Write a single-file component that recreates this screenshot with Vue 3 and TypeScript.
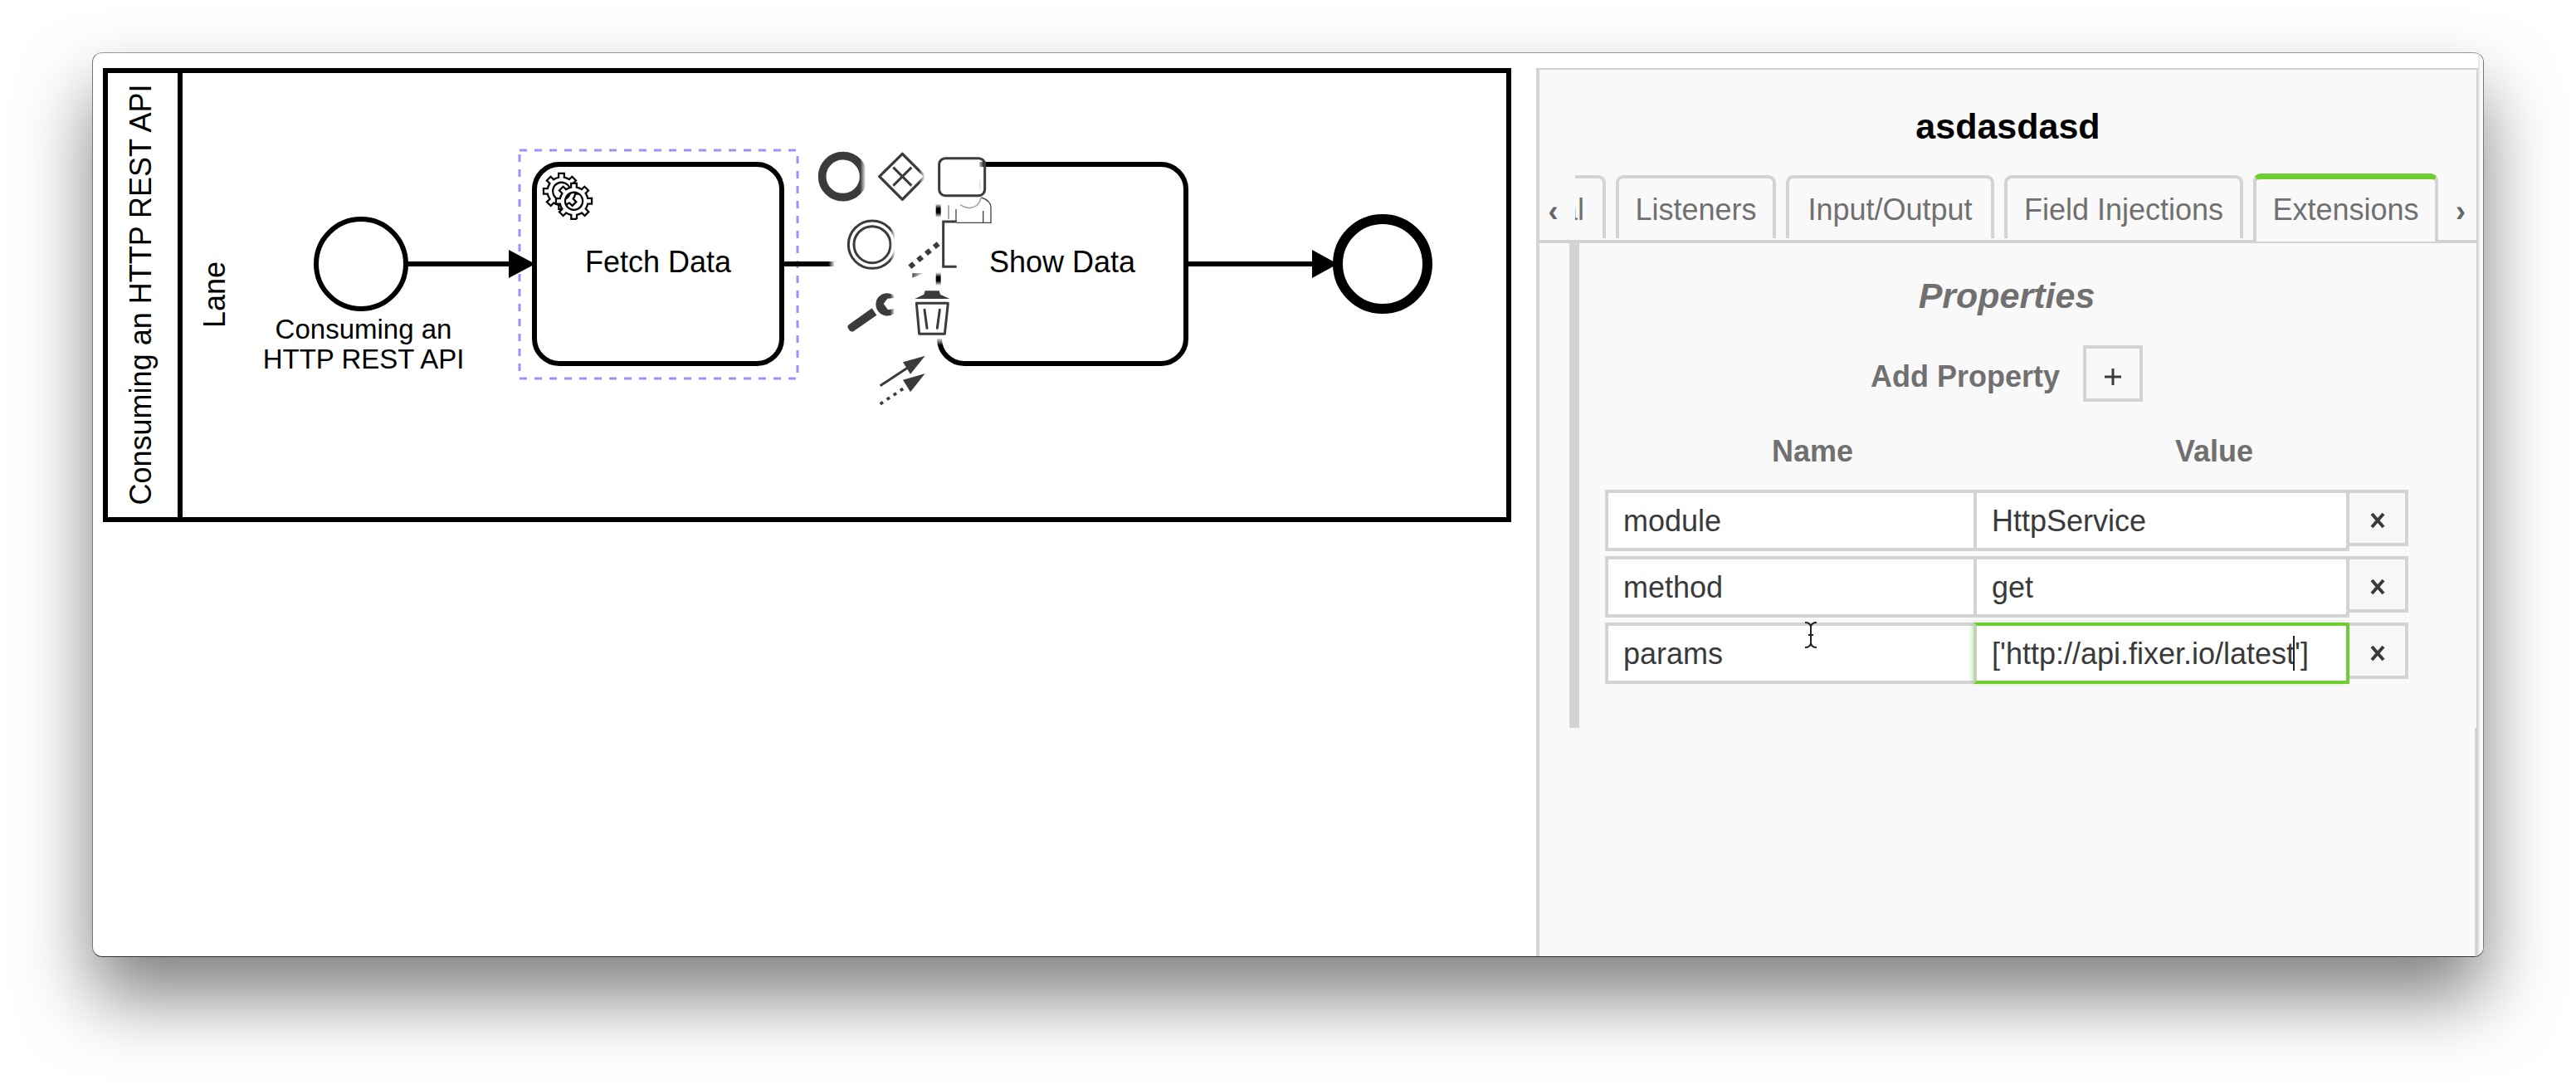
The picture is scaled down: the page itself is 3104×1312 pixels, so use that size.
<script setup lang="ts">
import { ref } from 'vue'

interface Property {
  name: string
  value: string
}

const tabs = ['General', 'Listeners', 'Input/Output', 'Field Injections', 'Extensions']
const activeTab = ref('Extensions')

const properties = ref<Property[]>([
  { name: 'module', value: 'HttpService' },
  { name: 'method', value: 'get' },
  { name: 'params', value: "['http://api.fixer.io/latest']" },
])
const focusedRow = ref(2)

function addProperty(): void {
  properties.value.push({ name: '', value: '' })
}

function removeProperty(index: number): void {
  properties.value.splice(index, 1)
}

const gear =
  'v -1.71335 c 0.352326,-0.0705 0.703932,-0.17838 1.047628,-0.32133 0.344416,-0.14465 0.665822,-0.32133 0.966377,-0.52145 l 1.19431,1.18005 1.567487,-1.57688 -1.195028,-1.18014 c 0.403376,-0.61394 0.683079,-1.29908 0.825447,-2.01824 l 1.622133,-0.01 v -2.2196 l -1.636514,0.01 c -0.07333,-0.35153 -0.178319,-0.70024 -0.323564,-1.04372 -0.145244,-0.34406 -0.321407,-0.6644 -0.522735,-0.96217 l 1.131035,-1.13631 -1.583305,-1.56293 -1.129598,1.13589 c -0.614052,-0.40108 -1.302883,-0.68093 -2.022633,-0.82247 l 0.0093,-1.61852 h -2.241173 l 0.0042,1.63124 c -0.353763,0.0736 -0.705369,0.17977 -1.049785,0.32371 -0.344415,0.14437 -0.665102,0.32092 -0.9635006,0.52006 l -1.1698628,-1.15823 -1.5667691,1.5792 1.1684265,1.15669 c -0.4026573,0.61283 -0.68308,1.29797 -0.8247287,2.01713 l -1.6588041,0.003 v 2.22174 l 1.6724648,-0.006 c 0.073327,0.35077 0.1797598,0.70243 0.3242851,1.04472 0.1452428,0.34448 0.3214064,0.6644 0.5227339,0.96066 l -1.1993431,1.19723 1.5840256,1.56011 1.1964668,-1.19348 c 0.6140517,0.40346 1.3028827,0.68232 2.0233517,0.82331 l 7.19e-4,1.69892 h 2.226848 z m 0.221462,-3.9957 c -1.788948,0.7502 -3.8576,-0.0928 -4.6097055,-1.87438 -0.7521065,-1.78321 0.090598,-3.84627 1.8802645,-4.59604 1.78823,-0.74936 3.856881,0.0929 4.608987,1.87437 0.752106,1.78165 -0.0906,3.84612 -1.879546,4.59605 z'
</script>

<template>
  <div class="page">
    <main class="window">
      <section class="canvas" aria-label="Process diagram">
        <svg class="diagram" viewBox="112 64 1739 1088">
          <defs>
            <linearGradient id="fade-right">
              <stop offset="0" stop-color="#fff" stop-opacity="0" />
              <stop offset="1" stop-color="#fff" />
            </linearGradient>
            <linearGradient id="fade-left">
              <stop offset="0" stop-color="#fff" />
              <stop offset="1" stop-color="#fff" stop-opacity="0" />
            </linearGradient>
            <linearGradient id="fade-up" x1="0" y1="0" x2="0" y2="1">
              <stop offset="0" stop-color="#fff" />
              <stop offset="1" stop-color="#fff" stop-opacity="0" />
            </linearGradient>
            <linearGradient id="fade-ends" x1="0" y1="0" x2="0" y2="1">
              <stop offset="0" stop-color="#000" stop-opacity="0" />
              <stop offset="0.35" stop-color="#000" />
              <stop offset="0.65" stop-color="#000" />
              <stop offset="1" stop-color="#000" stop-opacity="0" />
            </linearGradient>
            <linearGradient id="wedge">
              <stop offset="0" stop-color="#555" />
              <stop offset="1" stop-color="#555" stop-opacity="0" />
            </linearGradient>
          </defs>

          <!-- pool and lane -->
          <g fill="none" stroke="#000" stroke-width="6">
            <rect x="127" y="85" width="1691" height="541" />
            <path d="M217 85V626" />
          </g>
          <g class="label">
            <text transform="translate(182 355) rotate(-90)">Consuming an HTTP REST API</text>
            <text transform="translate(271 355) rotate(-90)">Lane</text>
          </g>

          <!-- selection outline -->
          <rect x="626" y="181" width="335" height="275" fill="none" stroke="#a08ffb" stroke-width="3" stroke-dasharray="9 9" />

          <!-- start event -->
          <circle cx="435" cy="318" r="54" fill="#fff" stroke="#000" stroke-width="6" />
          <g class="label small">
            <text x="438" y="408">Consuming an</text>
            <text x="438" y="444">HTTP REST API</text>
          </g>

          <!-- tasks -->
          <g fill="#fff" stroke="#000" stroke-width="6">
            <rect x="644" y="198" width="298" height="240" rx="30" />
            <path d="M1180 198H1399a30 30 0 0 1 30 30V408a30 30 0 0 1-30 30H1162a30 30 0 0 1-30-30" />
          </g>
          <g class="label">
            <text x="793" y="328">Fetch Data</text>
            <text x="1280" y="328">Show Data</text>
          </g>
          <g transform="translate(644 198) scale(3)" fill="#fff" stroke="#000" stroke-width="0.75">
            <path :d="`m 12,18 ${gear}`" />
            <path :d="`m 17,22 ${gear}`" />
          </g>

          <!-- flows -->
          <g stroke="#000" stroke-width="6">
            <path d="M491 318H614M945 318H1005M1432 318H1582" />
          </g>
          <path d="M613 301L645 318L613 335ZM1581 301L1612 318L1581 335Z" />
          <rect x="998" y="310" width="8" height="16" fill="url(#fade-right)" />

          <!-- end event -->
          <circle cx="1666" cy="318" r="54" fill="#fff" stroke="#000" stroke-width="12" />

          <!-- context pad -->
          <svg x="960" y="160" width="280" height="340" viewBox="0 0 840 1020">
            <rect x="500" y="740" width="40" height="28" fill="url(#fade-up)" />
            <rect x="655" y="100" width="25" height="30" fill="url(#fade-left)" />
            <rect x="503" y="256" width="18" height="50" fill="url(#fade-ends)" />
            <rect x="503" y="504" width="18" height="48" fill="url(#fade-ends)" />

            <g fill="none" stroke="#3b3b3b" stroke-width="9">
              <circle cx="167" cy="158" r="75" stroke-width="29" />
              <path d="M382 76L464 158L382 241L299 158Z" stroke-width="10" stroke-linejoin="round" />
              <path d="M349 125L415 191M415 125L349 191" />
              <rect x="515" y="92" width="165" height="135" rx="22" />
              <circle cx="273" cy="404" r="86" />
              <circle cx="273" cy="404" r="66" />
              <path d="M578 321H530V484H578" />
              <path d="M409 485L518 396" stroke-width="19" stroke-dasharray="19 19" />
              <path d="M433 616H547L535 727H443Z" stroke-linejoin="round" />
              <path d="M462 640L471 706M517 640L508 706" stroke-linecap="round" />
              <path d="M302 914L400 850" />
              <path d="M302 980L392 920" stroke-dasharray="12 17" stroke-width="11" />
            </g>
            <g fill="none" stroke="#444" stroke-width="4">
              <path d="M592 260Q625 282 652 262Q664 250 666 233" stroke="#999" />
              <path d="M662 172V204" stroke="#ddd" />
              <path d="M668 234Q702 246 702 270V325H578M674 282V325M576 276V322" />
              <path d="M549 262V312" stroke="#888" />
            </g>
            <g fill="#3b3b3b">
              <path d="M427 600L460 584L464 571H515L519 584L553 600Z" />
              <path d="M384 829L464 806L411 872Z" />
              <path d="M384 893L464 870L411 937Z" />
              <path d="M272 634L289 659L206 717Q196 722 189 712L185 704Q182 697 190 692Z" />
              <path d="M352 588A41 41 0 1 0 352 653V636L330 640L314 618L328 599L352 597Z" />
            </g>
            <path d="M418 507H462L418 524Z" fill="url(#wedge)" />

            <rect x="230" y="60" width="20" height="200" fill="url(#fade-right)" />
            <rect x="248" y="60" width="16" height="200" fill="#fff" />
            <rect x="442" y="120" width="22" height="80" fill="url(#fade-right)" />
            <rect x="462" y="120" width="12" height="80" fill="#fff" />
            <rect x="338" y="340" width="18" height="140" fill="url(#fade-right)" />
            <rect x="354" y="340" width="12" height="140" fill="#fff" />
            <rect x="338" y="580" width="18" height="90" fill="url(#fade-right)" />
          </svg>
        </svg>
      </section>

      <aside class="panel">
        <h1 class="title">asdasdasd</h1>

        <nav class="tab-strip">
          <button class="scroll scroll-left" type="button" aria-label="Scroll tabs left">‹</button>
          <div class="tabs" role="tablist">
            <button
              v-for="tab in tabs"
              :key="tab"
              type="button"
              role="tab"
              class="tab"
              :class="{ active: tab === activeTab }"
              :aria-selected="tab === activeTab"
              @click="activeTab = tab"
            >{{ tab }}</button>
          </div>
          <button class="scroll scroll-right" type="button" aria-label="Scroll tabs right">›</button>
        </nav>

        <div class="body">
          <div class="content">
            <h2 class="group-title">Properties</h2>
            <div class="add-row">
              <label for="add-property">Add Property</label>
              <button id="add-property" class="add" type="button" @click="addProperty">
                <svg width="24" height="24" viewBox="0 0 24 24" aria-hidden="true">
                  <path d="M12 2V22M2 12H22" stroke="#3a3a3a" stroke-width="3" />
                </svg>
              </button>
            </div>

            <table class="properties">
              <thead>
                <tr>
                  <th scope="col">Name</th>
                  <th scope="col">Value</th>
                </tr>
              </thead>
              <tbody>
                <tr v-for="(property, index) in properties" :key="index">
                  <td><input v-model="property.name" type="text" aria-label="Name" /></td>
                  <td>
                    <input
                      v-model="property.value"
                      type="text"
                      aria-label="Value"
                      :class="{ focused: index === focusedRow }"
                    />
                    <span v-if="index === focusedRow" class="caret"></span>
                  </td>
                  <td>
                    <button class="remove" type="button" aria-label="Remove property" @click="removeProperty(index)">
                      <svg width="24" height="24" viewBox="0 0 24 24" aria-hidden="true">
                        <path d="M5 4L19 20M19 4L5 20" stroke="#3a3a3a" stroke-width="4" />
                      </svg>
                    </button>
                  </td>
                </tr>
              </tbody>
            </table>

            <svg class="pointer" width="16" height="34" viewBox="0 0 16 34" aria-hidden="true">
              <path
                d="M1 2Q7 2 8 7Q9 2 15 2M8 7V27M1 32Q7 32 8 27Q9 32 15 32M5 17H11"
                fill="none"
                stroke="#222"
                stroke-width="2"
              />
            </svg>
          </div>
        </div>
        <div class="rest"></div>
      </aside>

      <div class="gutter"></div>
    </main>
  </div>
</template>

<style>
body {
  margin: 0;
  background: #fff;
}
</style>

<style scoped>
.page {
  display: flex;
  box-sizing: border-box;
  min-height: 100vh;
  padding: 63px 111px 159px;
  font-family: 'Liberation Sans', Arial, sans-serif;
  font-size: 36px;
  line-height: 40px;
  overflow: hidden;
}

.page * {
  box-sizing: border-box;
}

.window {
  flex: 1;
  display: grid;
  grid-template-columns: minmax(0, 1fr) 1135px 6px;
  border: 1px solid;
  border-color: #999 #777 #333;
  border-radius: 12px;
  background: #fff;
  box-shadow: 0 48px 88px rgba(0, 0, 0, 0.5);
  overflow: hidden;
}

.diagram {
  display: block;
  width: 100%;
}

.label {
  font-size: 36px;
  text-anchor: middle;
}

.label.small {
  font-size: 33px;
}

.gutter {
  border-left: 2px solid #e8e8e8;
  background: #fafafa;
}

.panel {
  display: flex;
  flex-direction: column;
  margin-top: 18px;
  border: solid #d3d3d3;
  border-width: 2px 2px 0 4px;
  background: #f9f9f9;
  color: #707070;
}

.title {
  margin: 44px 0 33px;
  font-size: 43px;
  line-height: 48px;
  text-align: center;
  color: #000;
}

button,
input {
  margin: 0;
  font: inherit;
  border-radius: 0;
  outline: none;
}

.tab-strip {
  display: flex;
  height: 84px;
  background: linear-gradient(#d3d3d3, #d3d3d3) bottom / 100% 4px no-repeat;
}

.scroll {
  flex: none;
  padding: 8px 0 0;
  border: 0;
  background: none;
  font-weight: bold;
  color: #666;
}

.scroll-left {
  width: 43px;
  padding-right: 10px;
}

.scroll-right {
  width: 34px;
  padding-right: 4px;
}

.tabs {
  flex: 1;
  display: grid;
  grid-template-columns: 180px 193px 251px 288px 223px;
  gap: 12px;
  justify-content: end;
  align-items: start;
  padding-right: 12px;
  overflow: hidden;
}

.tab {
  height: 76px;
  margin-top: 2px;
  padding: 4px 0 0;
  border: 4px solid #d3d3d3;
  border-bottom: 0;
  border-radius: 9px 9px 0 0;
  background: #f9f9f9;
  color: #707070;
  white-space: nowrap;
}

.tab.active {
  height: 82px;
  margin-top: 0;
  padding: 0 0 1px;
  border-top: 7px solid #6fce31;
}

.body {
  padding-left: 36px;
}

.content {
  position: relative;
  padding: 39px 82px 53px 31px;
  border-left: 12px solid #d3d3d3;
}

.group-title {
  margin: 0;
  font-size: 43px;
  line-height: 48px;
  font-style: italic;
  text-align: center;
}

.add-row {
  display: flex;
  align-items: center;
  justify-content: center;
  gap: 28px;
  margin-top: 36px;
  font-weight: bold;
}

.add-row label {
  padding-top: 8px;
}

.add,
.remove {
  display: flex;
  align-items: center;
  justify-content: center;
  width: 72px;
  height: 68px;
  padding: 0;
  border: 4px solid #d3d3d3;
  background: #f8f8f8;
}

.add {
  padding-top: 8px;
}

.remove {
  width: 100%;
  padding-top: 6px;
}

.properties {
  display: block;
  margin-top: 40px;
}

.properties thead,
.properties tbody {
  display: grid;
}

.properties thead tr {
  display: grid;
  grid-template-columns: 1fr 1fr;
  margin: 0 -8px 26px 8px;
}

.properties th {
  padding: 0;
  text-align: center;
}

.properties tbody {
  gap: 6px;
}

.properties tbody tr {
  display: grid;
  grid-template-columns: minmax(0, 444fr) minmax(0, 449fr) 75px;
}

.properties td {
  position: relative;
  padding: 0;
}

input {
  display: block;
  width: calc(100% + 4px);
  height: 74px;
  padding: 2px 18px 0;
  border: 4px solid #d3d3d3;
  background: #fff;
  color: #3a3a3a;
}

input.focused {
  position: relative;
  z-index: 1;
  border-color: #6fce31;
  border-left-color: #c3d1b9;
  box-shadow: -3px 0 5px -1px rgba(111, 206, 49, 0.4);
}

.caret {
  position: absolute;
  z-index: 2;
  top: 16px;
  left: 385px;
  width: 2px;
  height: 42px;
  background: #222;
}

.pointer {
  position: absolute;
  top: 455px;
  left: 271px;
}

.rest {
  flex: 1;
  border-right: 2px solid #d3d3d3;
}
</style>
